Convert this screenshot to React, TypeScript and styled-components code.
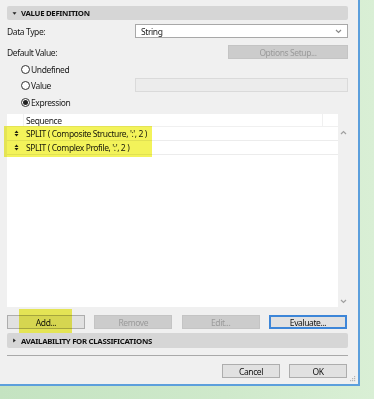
import React from "react";
import styled, { createGlobalStyle } from "styled-components";

const Global = createGlobalStyle`
  html, body { margin: 0; padding: 0; }
  body { font-family: "Noto Sans", "Open Sans", sans-serif; font-size: 8.5px; letter-spacing: -0.4px; color: #1a1a1a; }
`;

const Stage = styled.div`
  width: 374px;
  height: 399px;
  overflow: hidden;
  background: linear-gradient(90deg, #c4e3c1 0%, #cfe9cb 60%, #d9efd5 100%);
  display: flex;
  align-items: flex-start;
`;

const Window = styled.div`
  position: relative;
  width: 360px;
  height: 386px;
  box-sizing: border-box;
  background: #f0f0f0;
  border-right: 2px solid #5c9fdc;
  border-bottom: 2px solid #5c9fdc;
  padding: 6px 0 0 7px;
  display: flex;
  flex-direction: column;
`;

const Column = styled.div`
  width: 341px;
  display: flex;
  flex-direction: column;
`;

const SectionBar = styled.div<{ $mt?: number; $h?: number }>`
  height: ${(p) => p.$h ?? 14}px;
  margin-top: ${(p) => p.$mt ?? 0}px;
  background: #d6d6d6;
  border-radius: 2px;
  display: flex;
  align-items: center;
  padding-left: 5px;
  gap: 4px;
  font-weight: 700;
  font-size: 7.8px;
  letter-spacing: -0.3px;
  color: #111;
`;

const Row = styled.div<{ $mt?: number; $h?: number }>`
  display: flex;
  align-items: center;
  height: ${(p) => p.$h ?? 14}px;
  margin-top: ${(p) => p.$mt ?? 0}px;
`;

const Label = styled.div`
  width: 128px;
  flex: none;
`;

const Select = styled.div`
  flex: 1;
  height: 14px;
  box-sizing: border-box;
  background: #fff;
  border: 1px solid #a8a8a8;
  display: flex;
  align-items: center;
  justify-content: space-between;
  padding: 0 5px 0 5px;
`;

const Spacer = styled.div`
  flex: 1;
`;

const Button = styled.div<{ $w?: number; $disabled?: boolean; $focused?: boolean }>`
  width: ${(p) => p.$w ?? 78}px;
  height: 14px;
  box-sizing: border-box;
  flex: none;
  display: flex;
  align-items: center;
  justify-content: center;
  background: ${(p) => (p.$disabled ? "#cccccc" : "#e1e1e1")};
  border: ${(p) => (p.$focused ? "2px solid #3d86d8" : p.$disabled ? "1px solid #c4c4c4" : "1px solid #adadad")};
  color: ${(p) => (p.$disabled ? "#9a9a9a" : "#111")};
`;

const RadioRow = styled.div<{ $mt?: number }>`
  display: flex;
  align-items: center;
  height: 14px;
  margin-top: ${(p) => p.$mt ?? 0}px;
  padding-left: 14px;
`;

const RadioLabel = styled.div`
  width: 114px;
  flex: none;
  display: flex;
  align-items: center;
  gap: 1px;
`;

const Radio = styled.span<{ $checked?: boolean }>`
  width: 9px;
  height: 9px;
  box-sizing: border-box;
  border-radius: 50%;
  border: 1px solid #333;
  background: #fff;
  display: inline-flex;
  align-items: center;
  justify-content: center;
  &::after {
    content: "";
    width: 5px;
    height: 5px;
    border-radius: 50%;
    background: ${(p) => (p.$checked ? "#222" : "transparent")};
  }
`;

const DisabledField = styled.div`
  flex: 1;
  height: 14px;
  box-sizing: border-box;
  background: #ececec;
  border: 1px solid #dadada;
`;

const ListWrap = styled.div`
  margin-top: 5px;
  height: 193px;
  display: flex;
`;

const ListBody = styled.div`
  width: 331px;
  flex: none;
  display: flex;
  flex-direction: column;
`;

const HeaderRow = styled.div`
  height: 12px;
  display: flex;
  background: #f0f0f0;
  gap: 1px;
`;

const HeadCell = styled.div<{ $w?: number; $grow?: boolean }>`
  background: #fff;
  width: ${(p) => (p.$w ? `${p.$w}px` : "auto")};
  flex: ${(p) => (p.$grow ? 1 : "none")};
  display: flex;
  align-items: center;
  padding-left: ${(p) => (p.$grow ? 2 : 0)}px;
`;

const Rows = styled.div`
  flex: 1;
  background: #fff;
  margin-top: 1px;
  display: flex;
  flex-direction: column;
`;

const DataRow = styled.div`
  height: 13px;
  display: flex;
  align-items: center;
  border-bottom: 1px solid #ececec;
`;

const Handle = styled.div`
  width: 16px;
  flex: none;
  display: flex;
  justify-content: center;
  padding-left: 1px;
`;

const Cell = styled.div`
  padding-left: 2px;
  white-space: nowrap;
`;

const ScrollBar = styled.div`
  width: 10px;
  flex: none;
  display: flex;
  flex-direction: column;
  justify-content: space-between;
  align-items: center;
  padding: 16px 0 3px;
`;

const Separator = styled.div`
  height: 1px;
  background: #a9a9a9;
  margin-top: 7px;
`;

const ButtonRow = styled.div<{ $mt?: number; $justify?: string; $gap?: number }>`
  display: flex;
  justify-content: ${(p) => p.$justify ?? "space-between"};
  gap: ${(p) => p.$gap ?? 0}px;
  margin-top: ${(p) => p.$mt ?? 0}px;
  padding-right: 1px;
`;

const Highlight = styled.div`
  position: absolute;
  background: #f3f35a;
  mix-blend-mode: multiply;
  pointer-events: none;
`;

const Grip = styled.svg`
  position: absolute;
  right: 2px;
  bottom: 2px;
`;

const Chevron = ({ up = false, color = "#8a8a8a" }: { up?: boolean; color?: string }) => (
  <svg width="7" height="5" viewBox="0 0 7 5">
    <path d={up ? "M1 4 L3.5 1.5 L6 4" : "M1 1 L3.5 3.5 L6 1"} stroke={color} strokeWidth="1.2" fill="none" />
  </svg>
);

const Tri = ({ down = false }: { down?: boolean }) => (
  <svg width="5" height="5" viewBox="0 0 5 5">
    {down ? <path d="M0.5 1.2 L4.5 1.2 L2.5 3.8 Z" fill="#222" /> : <path d="M1.2 0.5 L3.8 2.5 L1.2 4.5 Z" fill="#222" />}
  </svg>
);

const UpDown = () => (
  <svg width="5" height="7" viewBox="0 0 5 7">
    <path d="M0.5 3 L2.5 0.5 L4.5 3 Z M0.5 4 L2.5 6.5 L4.5 4 Z" fill="#222" />
  </svg>
);

export default function App() {
  return (
    <>
      <Global />
      <Stage>
        <Window>
          <Column>
            <SectionBar>
              <Tri down />
              <span>VALUE DEFINITION</span>
            </SectionBar>
            <Row $mt={4}>
              <Label>Data Type:</Label>
              <Select>
                <span>String</span>
                <Chevron />
              </Select>
            </Row>
            <Row $mt={7}>
              <Label>Default Value:</Label>
              <Spacer />
              <Button $w={120} $disabled>Options Setup...</Button>
            </Row>
            <RadioRow $mt={3}>
              <RadioLabel>
                <Radio />
                <span>Undefined</span>
              </RadioLabel>
            </RadioRow>
            <RadioRow $mt={2}>
              <RadioLabel>
                <Radio />
                <span>Value</span>
              </RadioLabel>
              <DisabledField />
            </RadioRow>
            <RadioRow $mt={3}>
              <RadioLabel>
                <Radio $checked />
                <span>Expression</span>
              </RadioLabel>
            </RadioRow>
            <ListWrap>
              <ListBody>
                <HeaderRow>
                  <HeadCell $w={16} />
                  <HeadCell $grow>Sequence</HeadCell>
                  <HeadCell $w={15} />
                </HeaderRow>
                <Rows>
                  <DataRow>
                    <Handle>
                      <UpDown />
                    </Handle>
                    <Cell>SPLIT ( Composite Structure, ':', 2 )</Cell>
                  </DataRow>
                  <DataRow>
                    <Handle>
                      <UpDown />
                    </Handle>
                    <Cell>SPLIT ( Complex Profile, ':', 2 )</Cell>
                  </DataRow>
                </Rows>
              </ListBody>
              <ScrollBar>
                <Chevron up color="#a0a0a0" />
                <Chevron color="#a0a0a0" />
              </ScrollBar>
            </ListWrap>
            <ButtonRow $mt={8}>
              <Button>Add...</Button>
              <Button $disabled>Remove</Button>
              <Button $disabled>Edit...</Button>
              <Button $focused>Evaluate...</Button>
            </ButtonRow>
            <SectionBar $mt={4} $h={15}>
              <Tri />
              <span>AVAILABILITY FOR CLASSIFICATIONS</span>
            </SectionBar>
            <Separator />
            <ButtonRow $mt={8} $justify="flex-end" $gap={9}>
              <Button $w={58}>Cancel</Button>
              <Button $w={58}>OK</Button>
            </ButtonRow>
          </Column>
          <Highlight style={{ left: 4, top: 126, width: 148, height: 31 }} />
          <Highlight style={{ left: 19, top: 309, width: 53, height: 24 }} />
          <Grip width="7" height="7" viewBox="0 0 7 7">
            <g fill="#b5b5b5">
              <rect x="5" y="1" width="1.2" height="1.2" />
              <rect x="3" y="3" width="1.2" height="1.2" />
              <rect x="5" y="3" width="1.2" height="1.2" />
              <rect x="1" y="5" width="1.2" height="1.2" />
              <rect x="3" y="5" width="1.2" height="1.2" />
              <rect x="5" y="5" width="1.2" height="1.2" />
            </g>
          </Grip>
        </Window>
      </Stage>
    </>
  );
}
